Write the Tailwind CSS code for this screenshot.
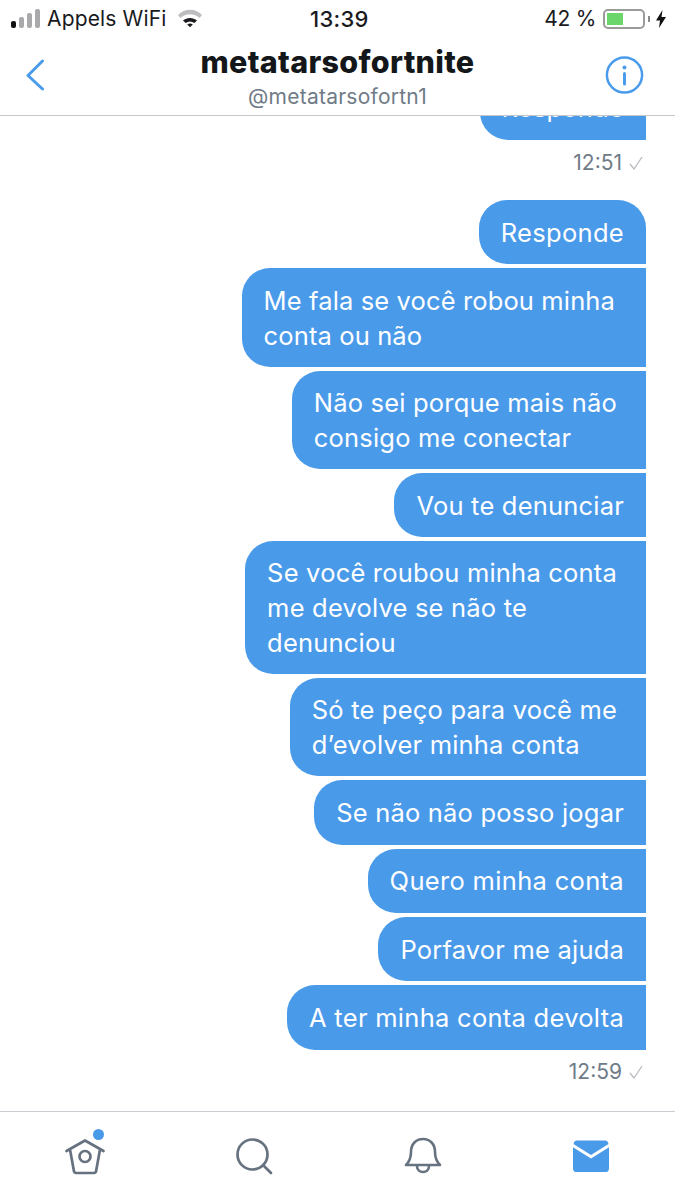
<!DOCTYPE html>
<html lang="pt"><head><meta charset="utf-8">
<script src="https://cdn.jsdelivr.net/npm/@tailwindcss/browser@4"></script>
<title>Chat</title></head>
<body class="bg-white overflow-hidden">
<div class="w-[675px] h-[1200px] flex flex-col overflow-hidden bg-white font-['Inter',sans-serif]">
  <!-- status bar -->
  <div class="h-[38px] shrink-0 relative flex items-center justify-between pl-[11px] pr-[9px] text-[#1a1a1e] text-[21px]">
    <div class="flex items-center">
      <div class="flex items-end gap-[3px] h-[19px] mt-[-2px] w-[29px]">
        <i class="block w-[5px] h-[7px] shrink-0 rounded-[2px] bg-[#111]"></i>
        <i class="block w-[5px] h-[11px] shrink-0 rounded-[2px] bg-[#a9a9ac]"></i>
        <i class="block w-[5px] h-[15px] shrink-0 rounded-[2px] bg-[#a9a9ac]"></i>
        <i class="block w-[5px] h-[19px] shrink-0 rounded-[2px] bg-[#a9a9ac]"></i>
      </div>
      <span class="ml-[7px] tracking-[0.15px]">Appels WiFi</span>
      <svg class="ml-[11px] mt-[-2px]" width="26" height="20" viewBox="0 0 26 20"><path d="M1 7C7.500 0 18.500 0 25 7L22.500 10C17.500 5 8.500 5 3.500 10Z" fill="#bdbdbf"/><path d="M6 12.500C10 9 16 9 20 12.500L17.300 15C14.500 13 11.500 13 8.700 15Z" fill="#1a1a1e"/><path d="M10.200 16.500C12 15.300 14 15.300 15.800 16.500L13 19.300Z" fill="#1a1a1e"/></svg>
    </div>
    <span class="absolute left-[310px] top-[3px] text-[22px] font-medium tracking-[0.3px]">13:39</span>
    <div class="flex items-center">
      <span class="tracking-[-0.3px]">42 %</span>
      <div class="ml-[7px] w-[42px] h-[20px] border-2 border-[#9b9b9b] rounded-[5px] p-[2px]"><div class="h-full w-[16px] bg-[#6bd66b]"></div></div>
      <i class="block w-[2px] h-[6px] bg-[#8a8a8a] ml-[3px]"></i>
      <svg class="ml-[6px]" width="10" height="18" viewBox="0 0 10 18"><path d="M6.500 0L0 10.500H4L3 18L10 7H5.500Z" fill="#111"/></svg>
    </div>
  </div>
  <!-- header -->
  <div class="h-[78px] shrink-0 relative z-10 bg-white border-b border-[#c4c8cd] flex flex-col items-center">
    <svg class="absolute left-[25px] top-[21px]" width="20" height="32" viewBox="0 0 20 32"><path d="M17.500 2L3 16.500L17.500 30" fill="none" stroke="#4a9ceb" stroke-width="3" stroke-linecap="round" stroke-linejoin="round"/></svg>
    <div class="text-[30.500px] leading-[36px] mt-[6px] font-extrabold text-[#14171a] tracking-[0.3px]">metatarsofortnite</div>
    <div class="text-[21px] leading-[24px] mt-[5px] text-[#6f7b87] tracking-[0.25px]">@metatarsofortn1</div>
    <svg class="absolute left-[605px] top-[18px]" width="39" height="39" viewBox="0 0 39 39"><circle cx="19.500" cy="19" r="17.600" fill="none" stroke="#4a9ceb" stroke-width="2.500"/><circle cx="19.500" cy="11.500" r="2" fill="#4a9ceb"/><path d="M19.500 17.500V28" stroke="#4a9ceb" stroke-width="3" stroke-linecap="round"/></svg>
  </div>
  <!-- chat -->
  <div class="flex-1 min-h-0 overflow-hidden flex flex-col items-end pr-[29px] text-white text-[25.500px] leading-[35px] tracking-[0.2px]">
    <div class="mt-[-40.400px] bg-[#4a9aea] rounded-[28px] rounded-br-none px-[22px] py-[14.700px] whitespace-nowrap">Responde</div>
    <div class="mt-[11px] mr-[3px] flex items-center gap-[7px] text-[21px] leading-[24px] text-[#6f7b87] h-[24px] tracking-normal"><span>12:51</span><svg width="14" height="14" viewBox="0 0 14 14"><path d="M1 8L5 13L13 1" fill="none" stroke="#b9bcc0" stroke-width="1.300"/></svg></div>
    <div class="mt-[25px] bg-[#4a9aea] rounded-[28px] rounded-br-none px-[22px] py-[14.700px] whitespace-nowrap tracking-[0.3px]">Responde</div>
    <div class="mt-[4px] bg-[#4a9aea] rounded-[28px] rounded-tr-none rounded-br-none pl-[22px] pr-[31px] py-[14.200px] whitespace-nowrap tracking-[0.13px]">Me fala se você robou minha<br>conta ou não</div>
    <div class="mt-[4px] bg-[#4a9aea] rounded-[28px] rounded-tr-none rounded-br-none pl-[22px] pr-[29px] py-[14.200px] whitespace-nowrap">Não sei porque mais não<br>consigo me conectar</div>
    <div class="mt-[4px] bg-[#4a9aea] rounded-[28px] rounded-tr-none rounded-br-none px-[22px] py-[14.700px] whitespace-nowrap">Vou te denunciar</div>
    <div class="mt-[4px] bg-[#4a9aea] rounded-[28px] rounded-tr-none rounded-br-none pl-[22px] pr-[29px] py-[13.700px] whitespace-nowrap">Se você roubou minha conta<br>me devolve se não te<br>denunciou</div>
    <div class="mt-[4px] bg-[#4a9aea] rounded-[28px] rounded-tr-none rounded-br-none pl-[22px] pr-[29px] py-[14.200px] whitespace-nowrap">Só te peço para você me<br>d’evolver minha conta</div>
    <div class="mt-[4px] bg-[#4a9aea] rounded-[28px] rounded-tr-none rounded-br-none px-[22px] py-[14.700px] whitespace-nowrap">Se não não posso jogar</div>
    <div class="mt-[4px] bg-[#4a9aea] rounded-[28px] rounded-tr-none rounded-br-none px-[22px] py-[14.700px] whitespace-nowrap tracking-[0.32px]">Quero minha conta</div>
    <div class="mt-[4px] bg-[#4a9aea] rounded-[28px] rounded-tr-none rounded-br-none px-[22px] py-[14.700px] whitespace-nowrap">Porfavor me ajuda</div>
    <div class="mt-[4px] bg-[#4a9aea] rounded-[28px] rounded-tr-none rounded-br-none px-[22px] py-[14.700px] whitespace-nowrap tracking-[0.28px]">A ter minha conta devolta</div>
    <div class="mt-[10px] mr-[3px] flex items-center gap-[7px] text-[21px] leading-[24px] text-[#6f7b87] h-[24px] tracking-normal"><span>12:59</span><svg width="14" height="14" viewBox="0 0 14 14"><path d="M1 8L5 13L13 1" fill="none" stroke="#b9bcc0" stroke-width="1.300"/></svg></div>
  </div>
  <!-- tab bar -->
  <div class="h-[89px] shrink-0 border-t border-[#c9ccd0] relative">
    <svg class="absolute left-[64px] top-[23px]" width="42" height="42" viewBox="0 0 42 42"><path d="M2.500 16L21 5.500L39.500 16M6 14.500L10 36.500Q10.500 38 12 38H30Q31.500 38 32 36.500L36 14.500" fill="none" stroke="#66727f" stroke-width="2.700" stroke-linecap="round" stroke-linejoin="round"/><circle cx="21" cy="21.500" r="5.500" fill="none" stroke="#66727f" stroke-width="2.700"/></svg>
    <i class="absolute block left-[93px] top-[17px] w-[11px] h-[11px] rounded-full bg-[#4a9aea]"></i>
    <svg class="absolute left-[235px] top-[25px]" width="38" height="38" viewBox="0 0 38 38"><circle cx="17.500" cy="17.500" r="15" fill="none" stroke="#66727f" stroke-width="2.700"/><path d="M28 28L36 36" stroke="#66727f" stroke-width="2.700" stroke-linecap="round"/></svg>
    <svg class="absolute left-[404px] top-[25px]" width="38" height="38" viewBox="0 0 38 38"><path d="M2 28H36C32 24 31 21 31 15C31 7 26 2 19 2C12 2 7 7 7 15C7 21 6 24 2 28Z" fill="none" stroke="#66727f" stroke-width="2.600" stroke-linejoin="round"/><path d="M13 29C13 37 25 37 25 29" fill="none" stroke="#66727f" stroke-width="2.600"/></svg>
    <svg class="absolute left-[573px] top-[28px]" width="36" height="33" viewBox="0 0 38 34" preserveAspectRatio="none"><path d="M0 7.500V29Q0 33 4 33H34Q38 33 38 29V7.500L19 19Z" fill="#4a9aea"/><path d="M0.500 4L19 15.500L37.500 4Q36.500 0.500 34 0.500H4Q1.500 0.500 0.500 4Z" fill="#4a9aea"/></svg>
  </div>
</div>
</body></html>
